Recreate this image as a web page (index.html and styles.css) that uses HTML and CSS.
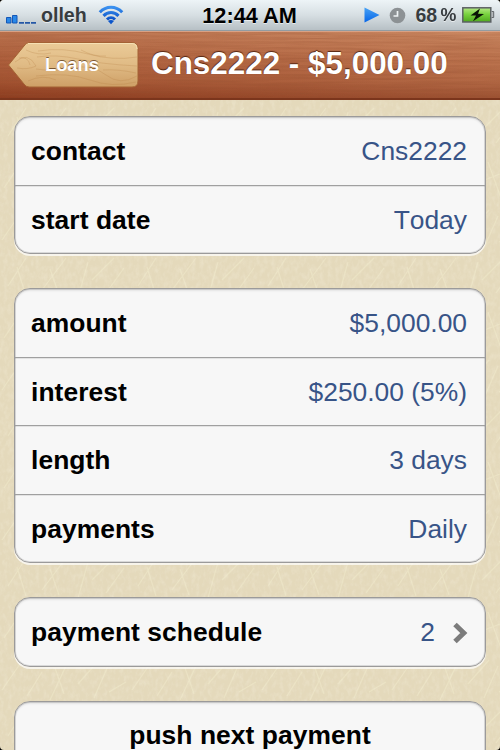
FILE: index.html
```html
<!DOCTYPE html>
<html lang="en">
<head>
<meta charset="utf-8">
<title>Loans</title>
<link rel="stylesheet" href="styles.css">
</head>
<body>
<div class="phone">
  <svg class="leather" width="500" height="750" aria-hidden="true">
    <defs>
      <filter id="grain" x="0" y="0" width="100%" height="100%">
        <feTurbulence type="fractalNoise" baseFrequency="0.25 0.15" numOctaves="3" seed="4"/>
        <feColorMatrix values="0 0 0 0 1  0 0 0 0 0.97  0 0 0 0 0.87  1.6 0 0 0 -0.62"/>
      </filter>
      <pattern id="creases" width="130" height="150" patternUnits="userSpaceOnUse">
        <path d="M4 38L24 8M18 54L42 20L50 2M46 45L34 15M60 42L82 6M76 50L92 31L110 24M98 12L111 48M113 36L126 14M2 90L20 64L33 59M27 96L42 72M50 100L66 66M64 94L55 68M78 84L99 60M94 98L108 66M109 92L126 82M8 136L26 108M26 146L17 117M42 140L66 108M59 145L50 119M78 148L88 112M92 130L114 108M106 143L124 118"/>
      </pattern>
    </defs>
    <rect width="500" height="750" filter="url(#grain)" opacity=".26"/>
    <rect width="500" height="750" fill="url(#creases)"/>
  </svg>

  <header class="status">
    <div class="carrier">
      <svg width="31" height="10" viewBox="0 0 31 10">
        <path class="bar" d="M.5 3.500h4.500v5.500h-4.500zM6.500 1.500h4.500v7.500h-4.500z"/>
        <path class="dash" d="M13 8h5v1.700h-5zM19 8h5v1.700h-5zM25 8h5v1.700h-5z"/>
      </svg>
      <span class="carrier-name">olleh</span>
      <svg class="wifi" width="26" height="20" viewBox="0 0 26 20">
        <defs><linearGradient id="blue" x2="0" y2="1"><stop stop-color="#3a91f0"/><stop offset="1" stop-color="#0b52c7"/></linearGradient></defs>
        <path d="M1.800 7.200C8 .5 18 .5 24.200 7.200M5.500 10.900C9.700 6.500 16.300 6.500 20.500 10.900M9 14.500C11.300 12.200 14.700 12.200 17 14.500"/>
        <path class="dot" d="M10 16Q13 13.800 16 16L13 19.300z"/>
      </svg>
    </div>
    <div class="clock">12:44 AM</div>
    <div class="indicators">
      <svg width="16" height="18" viewBox="0 0 16 18"><defs><linearGradient id="play" x2="0" y2="1"><stop stop-color="#48a2f5"/><stop offset="1" stop-color="#0565e8"/></linearGradient></defs><path d="M.5 1.500L15.500 9L.5 16.500z" fill="url(#play)"/></svg>
      <svg class="alarm" width="17" height="17" viewBox="0 0 17 17"><circle cx="8.500" cy="8.500" r="7.800" fill="#8c9194"/><path d="M8.500 4v5H4.500" fill="none" stroke="#eef2f4" stroke-width="1.700"/></svg>
      <span class="num">68</span><span class="pct">%</span>
      <svg class="battery" width="34" height="18" viewBox="0 0 34 18">
        <defs><linearGradient id="charge" x2="0" y2="1"><stop stop-color="#b5e985"/><stop offset=".45" stop-color="#79d33f"/><stop offset="1" stop-color="#4ea81d"/></linearGradient></defs>
        <rect x="1.800" y="1.800" width="28" height="14.200" fill="url(#charge)" stroke="#5c6164" stroke-width="1.500"/>
        <path d="M30.700 5.500h2v6h-2" fill="#b5babd" stroke="#62676a" stroke-width="1"/>
        <path d="M19 2.500L9.500 9.500L15 9.600L12 15.200L23 7.900L17 7.800z" fill="#091405"/>
      </svg>
    </div>
  </header>

  <nav class="navbar">
    <svg class="wood" width="500" height="70" aria-hidden="true">
      <filter id="woodgrain" x="0" y="0" width="100%" height="100%">
        <feTurbulence type="fractalNoise" baseFrequency="0.012 0.5" numOctaves="3" seed="7"/>
        <feColorMatrix values="0 0 0 0 .3  0 0 0 0 .08  0 0 0 0 .03  1.6 0 0 0 -.6"/>
      </filter>
      <rect width="500" height="70" filter="url(#woodgrain)" opacity=".45"/>
    </svg>
    <a class="back">
      <svg class="back-shape" width="132" height="48" viewBox="0 0 132 48" aria-hidden="true">
        <defs><linearGradient id="pine" x2="0" y2="1"><stop stop-color="#ebcb98"/><stop offset=".5" stop-color="#e0bb85"/><stop offset="1" stop-color="#ce9f66"/></linearGradient></defs>
        <path d="M21 1.500H124Q130 1.500 130 7.500V40Q130 46 124 46H21Q18 46 16 43L.5 24L16 5Q18 1.500 21 1.500z" fill="url(#pine)" stroke="#a46234"/>
        <path d="M20 2.500H124Q129 2.500 129 8" fill="none" stroke="#f6e0b4"/>
        <g fill="none" stroke="#b47c42" stroke-opacity=".32" stroke-width=".8">
          <path d="M7 21Q20 10 28 25Q20 29 9 27M11 17Q20 15 22 24M30 10Q55 6 80 13T129 16M29 16Q48 13 70 18T129 25M28 28Q48 31 66 27T98 34T129 35M28 35Q60 31 82 39T128 41M18 9Q30 15 43 12M20 40Q35 33 48 39M73 9Q86 16 98 15M95 29Q110 28 128 32"/>
        </g>
      </svg>
      <span class="back-label">Loans</span>
    </a>
    <h1 class="title">Cns2222 - $5,000.00</h1>
  </nav>

  <main class="groups">
    <section class="card">
      <div class="row"><span class="label">contact</span><span class="value">Cns2222</span></div>
      <div class="row"><span class="label">start date</span><span class="value">Today</span></div>
    </section>
    <section class="card">
      <div class="row"><span class="label">amount</span><span class="value">$5,000.00</span></div>
      <div class="row"><span class="label">interest</span><span class="value">$250.00 (5%)</span></div>
      <div class="row"><span class="label">length</span><span class="value">3 days</span></div>
      <div class="row"><span class="label">payments</span><span class="value">Daily</span></div>
    </section>
    <section class="card">
      <div class="row"><span class="label">payment schedule</span><span class="value">2<svg class="chevron" width="15" height="22" viewBox="0 0 15 22"><path d="M2 2.500L10.800 11L2 19.500"/></svg></span></div>
    </section>
    <section class="card">
      <div class="row action"><span class="label">push next payment</span></div>
    </section>
  </main>
</div>
</body>
</html>
```
FILE: styles.css
```css
* { box-sizing: border-box; }
body { margin: 0; background: #000; font-family: "Liberation Sans", Arial, sans-serif; }
svg { display: block; flex: none; }
.phone { position: relative; width: 500px; height: 750px; overflow: hidden; background: #e4d9bb; border-radius: 4px; }
.leather { position: absolute; top: 0; left: 0; }
#creases path { fill: none; stroke: #f4edcf; stroke-opacity: .42; stroke-width: 1.2; }

.status {
  position: relative;
  display: grid;
  grid-template-columns: 1fr auto 1fr;
  align-items: center;
  height: 31px;
  padding: 0 5px 0 6px;
  background: linear-gradient(#edf4f7, #d7dfe3 50%, #b7c0c5);
  border-bottom: 1px solid #929ca2;
  color: #373c40;
  font-weight: bold;
  text-shadow: 0 1px 0 rgba(255, 255, 255, .6);
}
.carrier, .indicators { display: flex; align-items: center; }
.carrier svg:first-child { margin-top: 7px; }
.carrier-name { margin-left: 4px; font-size: 19.600px; }
.wifi { margin: 0 0 0 11px; }
.wifi path { fill: none; stroke: url(#blue); stroke-width: 3; }
.wifi .dot { fill: #0b55cb; stroke: none; }
.bar { fill: #2988e8; stroke: #1557b6; }
.dash { fill: #2457a6; }
.clock { margin: 1px 0 0 -2px; color: #000; font-size: 21.700px; }
.indicators { justify-content: flex-end; }
.alarm { margin-left: 9px; }
.num { margin-left: 9px; font-size: 19.500px; }
.pct { margin: 0 4px 0 3px; font-size: 19px; transform: scaleX(.94); }

.navbar {
  position: relative;
  display: flex;
  align-items: center;
  height: 69px;
  padding-left: 8px;
  background:
    linear-gradient(90deg, rgba(120, 40, 15, .08), rgba(255, 215, 170, .14)),
    linear-gradient(#c17a55, #b46743 35%, #a65634 75%, #8e3d20);
  border-top: 1px solid #d9a184;
  border-bottom: 2px solid #7b351c;
  overflow: hidden;
}
.wood { position: absolute; top: 0; left: 0; }
.back { position: relative; width: 132px; height: 48px; display: grid; place-items: center; }
.back-shape { position: absolute; top: 0; left: 0; }
.back-label {
  position: relative;
  left: -2px;
  font-weight: bold;
  font-size: 18.400px;
  line-height: 24px;
  color: #fff;
  text-shadow: 0 -1px 0 rgba(90, 55, 25, .75);
}
.title {
  position: relative;
  margin: -2px 0 0 11px;
  font-size: 31.400px;
  line-height: 36px;
  white-space: nowrap;
  color: #fff;
  text-shadow: 0 -1px 1px rgba(60, 20, 5, .8);
}

.groups { position: relative; display: flex; flex-direction: column; gap: 33.900px; padding: 16px 14px 0; }
.card {
  border: 1px solid #9b9a9a;
  border-radius: 16px;
  background: #f7f7f7;
  box-shadow: 0 2px 0 rgba(255, 255, 255, .7), inset 0 0 0 1px rgba(0, 0, 0, .12), inset 0 2px 2px rgba(0, 0, 0, .08);
}
.row { display: flex; align-items: center; justify-content: space-between; height: 67.700px; padding: 1.400px 18px 0 16px; font-size: 26.400px; font-kerning: none; }
.row + .row { height: 68.500px; border-top: 1px solid #a0a0a0; box-shadow: inset 0 1px 0 rgba(0, 0, 0, .08); }
.label { font-weight: bold; color: #000; letter-spacing: .06px; }
.value { display: flex; align-items: center; color: #385487; }
.chevron { margin: 0 -1px 0 18px; }
.chevron path { fill: none; stroke: #7c7c7c; stroke-width: 5; }
.action { justify-content: center; padding: 0 16px; }
```
